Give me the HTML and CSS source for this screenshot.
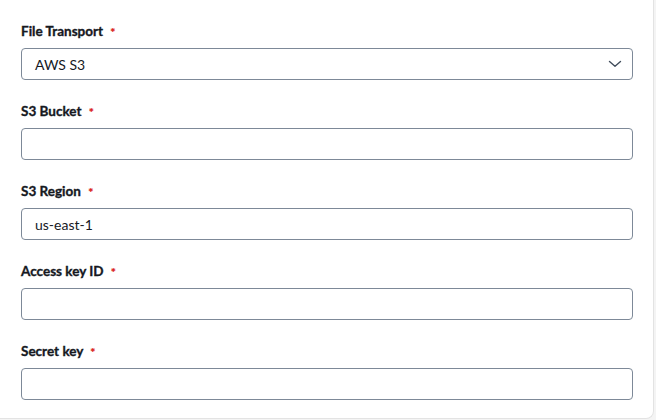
FILE: index.html
```html
<!DOCTYPE html>
<html>
<head>
<meta charset="utf-8">
<link rel="stylesheet" href="styles.css">
</head>
<body>
<div class="card">
  <div class="field">
    <label class="label">File Transport <span class="req">*</span></label>
    <div class="select">
      <span class="value">AWS S3</span>
      <svg class="chev" width="14" height="8" viewBox="0 0 14 8"><path d="M1.5 1.5 L7 6.3 L12.5 1.5" fill="none" stroke="#414d5c" stroke-width="1.4" stroke-linecap="round" stroke-linejoin="round"/></svg>
    </div>
  </div>
  <div class="field">
    <label class="label">S3 Bucket <span class="req">*</span></label>
    <div class="input"></div>
  </div>
  <div class="field">
    <label class="label">S3 Region <span class="req">*</span></label>
    <div class="input"><span class="value">us-east-1</span></div>
  </div>
  <div class="field">
    <label class="label">Access key ID <span class="req">*</span></label>
    <div class="input"></div>
  </div>
  <div class="field">
    <label class="label">Secret key <span class="req">*</span></label>
    <div class="input"></div>
  </div>
</div>
</body>
</html>
```
FILE: styles.css
```css
html, body {
  margin: 0;
  padding: 0;
  background: #f4f4f4;
}
body {
  width: 656px;
  height: 420px;
  font-family: "Source Sans Pro", Lato, "Liberation Sans", sans-serif;
  color: #16191f;
}
.card {
  box-sizing: border-box;
  width: 654px;
  height: 419px;
  background: #ffffff;
  border: 1px solid #e3e3e3;
  border-left: none;
  border-top: none;
  border-radius: 0 0 8px 0;
  padding: 21px 20px 18px 21px;
  display: flex;
  flex-direction: column;
  gap: 21px;
}
.field {
  display: flex;
  flex-direction: column;
  gap: 7px;
}
.label {
  font-size: 13.5px;
  font-weight: 700;
  line-height: 20px;
  height: 20px;
  color: #16191f;
  -webkit-text-stroke: 0.35px #16191f;
}
.req {
  color: #d91515;
  -webkit-text-stroke: 0.2px #d91515;
  font-size: 12px;
  font-weight: 700;
  margin-left: 4px;
  position: relative;
  top: 1px;
}
.select, .input {
  box-sizing: border-box;
  height: 32px;
  border: 1px solid #7d8998;
  border-radius: 4px;
  display: flex;
  align-items: center;
  padding: 0 10px 0 13px;
  font-size: 14px;
  color: #16191f;
}
.select {
  justify-content: space-between;
}
```
